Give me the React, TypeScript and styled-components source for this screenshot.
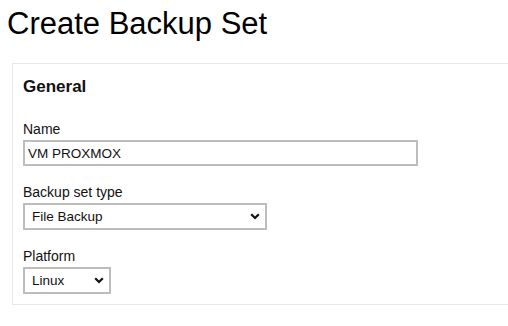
import React from 'react';
import styled, { createGlobalStyle } from 'styled-components';

const GlobalStyle = createGlobalStyle`
  html, body {
    margin: 0;
    padding: 0;
    background: #ffffff;
    overflow: hidden;
  }
  body {
    font-family: "Liberation Sans", Arial, sans-serif;
    color: #111;
  }
`;

const Page = styled.div`
  padding: 0 0 0 7px;
`;

const Title = styled.h1`
  font-size: 31px;
  font-weight: normal;
  margin: 0;
  padding-top: 6px;
  line-height: 36px;
  color: #000;
`;

const Panel = styled.section`
  margin: 21px 0 0 5px;
  width: 520px;
  border: 1px solid #e8e8e8;
  padding: 12px 10px 10px 10px;
  box-sizing: border-box;
`;

const PanelTitle = styled.h2`
  font-size: 17px;
  font-weight: bold;
  margin: 0 0 23px 0;
  line-height: 22px;
`;

const Field = styled.div`
  display: flex;
  flex-direction: column;
  align-items: flex-start;
  margin-bottom: 18px;

  &:last-child {
    margin-bottom: 0;
  }
`;

const Label = styled.label`
  font-size: 14px;
  line-height: 16px;
  margin-bottom: 3px;
  color: #111;
`;

const TextInput = styled.input<{ width: number }>`
  width: ${({ width }) => width}px;
  height: 26px;
  box-sizing: border-box;
  border: 2px solid #bdbdbd;
  padding: 0 3px;
  font-family: "Liberation Sans", Arial, sans-serif;
  font-size: 13.5px;
  color: #111;
  outline: none;
`;

const SelectWrap = styled.div<{ width: number }>`
  width: ${({ width }) => width}px;
  height: 27px;
  box-sizing: border-box;
  border: 2px solid #bdbdbd;
  display: flex;
  align-items: center;
  padding: 0 5px 0 7px;
  font-size: 13.5px;
  color: #111;
`;

const SelectText = styled.span`
  flex: 1;
`;

const Chevron = () => (
  <svg width="10" height="7" viewBox="0 0 10 7">
    <path d="M1.2 1.2 L5 5 L8.8 1.2" fill="none" stroke="#111" strokeWidth="2.2" />
  </svg>
);

export default function App() {
  return (
    <Page>
      <GlobalStyle />
      <Title>Create Backup Set</Title>
      <Panel>
        <PanelTitle>General</PanelTitle>
        <Field>
          <Label>Name</Label>
          <TextInput width={395} defaultValue="VM PROXMOX" />
        </Field>
        <Field>
          <Label>Backup set type</Label>
          <SelectWrap width={244}>
            <SelectText>File Backup</SelectText>
            <Chevron />
          </SelectWrap>
        </Field>
        <Field>
          <Label>Platform</Label>
          <SelectWrap width={88}>
            <SelectText>Linux</SelectText>
            <Chevron />
          </SelectWrap>
        </Field>
      </Panel>
    </Page>
  );
}
